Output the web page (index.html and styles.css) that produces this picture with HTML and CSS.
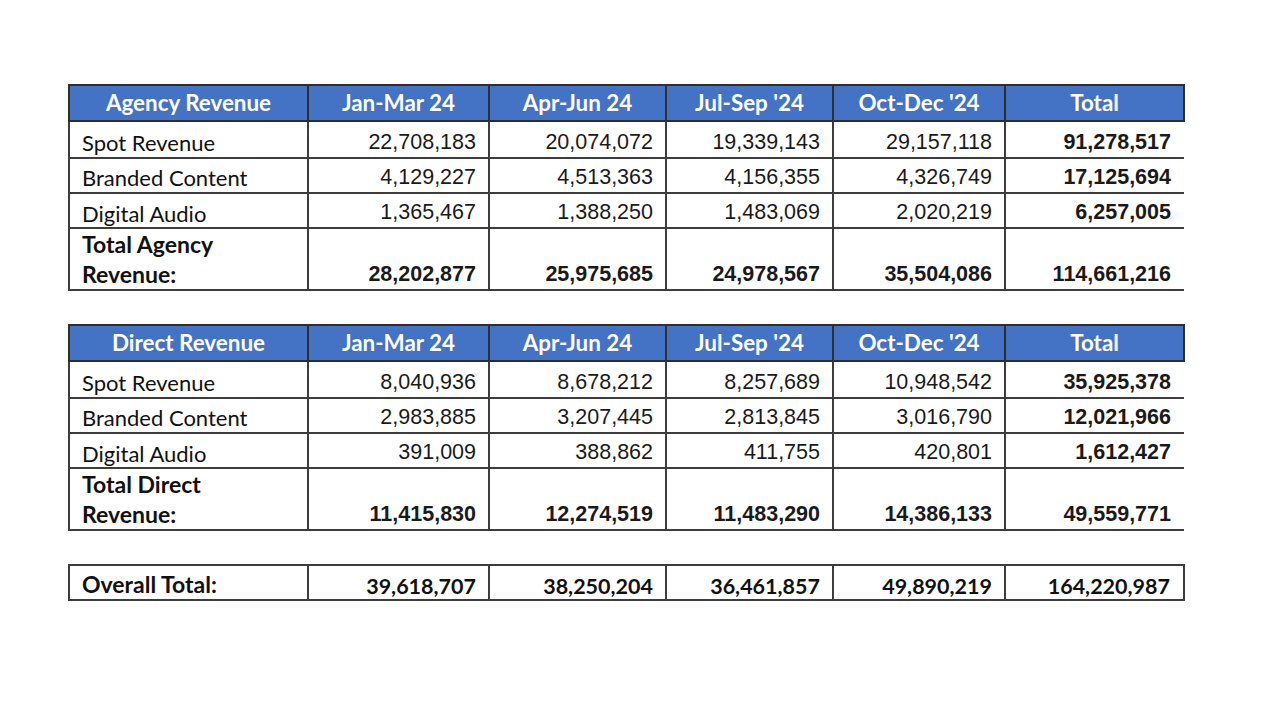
FILE: index.html
```html
<!DOCTYPE html>
<html>
<head>
<meta charset="utf-8">
<link rel="stylesheet" href="styles.css">
</head>
<body>
<div class="page">
  <table class="rev">
    <colgroup><col class="c0"><col class="c1"><col class="c2"><col class="c3"><col class="c4"><col class="c5"></colgroup>
    <tr class="head"><th>Agency Revenue</th><th>Jan-Mar 24</th><th>Apr-Jun 24</th><th>Jul-Sep '24</th><th>Oct-Dec '24</th><th>Total</th></tr>
    <tr class="r1"><td class="lbl">Spot Revenue</td><td>22,708,183</td><td>20,074,072</td><td>19,339,143</td><td>29,157,118</td><td class="tot">91,278,517</td></tr>
    <tr class="r2"><td class="lbl">Branded Content</td><td>4,129,227</td><td>4,513,363</td><td>4,156,355</td><td>4,326,749</td><td class="tot">17,125,694</td></tr>
    <tr class="r3"><td class="lbl">Digital Audio</td><td>1,365,467</td><td>1,388,250</td><td>1,483,069</td><td>2,020,219</td><td class="tot">6,257,005</td></tr>
    <tr class="sum"><td class="lbl">Total Agency<br>Revenue:</td><td>28,202,877</td><td>25,975,685</td><td>24,978,567</td><td>35,504,086</td><td class="tot">114,661,216</td></tr>
  </table>

  <table class="rev">
    <colgroup><col class="c0"><col class="c1"><col class="c2"><col class="c3"><col class="c4"><col class="c5"></colgroup>
    <tr class="head"><th>Direct Revenue</th><th>Jan-Mar 24</th><th>Apr-Jun 24</th><th>Jul-Sep '24</th><th>Oct-Dec '24</th><th>Total</th></tr>
    <tr class="r1"><td class="lbl">Spot Revenue</td><td>8,040,936</td><td>8,678,212</td><td>8,257,689</td><td>10,948,542</td><td class="tot">35,925,378</td></tr>
    <tr class="r2"><td class="lbl">Branded Content</td><td>2,983,885</td><td>3,207,445</td><td>2,813,845</td><td>3,016,790</td><td class="tot">12,021,966</td></tr>
    <tr class="r3"><td class="lbl">Digital Audio</td><td>391,009</td><td>388,862</td><td>411,755</td><td>420,801</td><td class="tot">1,612,427</td></tr>
    <tr class="sum"><td class="lbl">Total Direct<br>Revenue:</td><td>11,415,830</td><td>12,274,519</td><td>11,483,290</td><td>14,386,133</td><td class="tot">49,559,771</td></tr>
  </table>

  <table class="rev overall">
    <colgroup><col class="c0"><col class="c1"><col class="c2"><col class="c3"><col class="c4"><col class="c5"></colgroup>
    <tr class="ov"><td class="lbl">Overall Total:</td><td>39,618,707</td><td>38,250,204</td><td>36,461,857</td><td>49,890,219</td><td class="tot">164,220,987</td></tr>
  </table>
</div>
</body>
</html>
```

FILE: styles.css
```css
html, body {
  margin: 0;
  padding: 0;
  background: #ffffff;
}

.page {
  width: 1280px;
  height: 720px;
  padding: 84px 0 0 68px;
  box-sizing: border-box;
  display: flex;
  flex-direction: column;
  gap: 33px;
}

.rev {
  border-collapse: collapse;
  table-layout: fixed;
  width: 1117px;
}

.c0 { width: 239px; }
.c1 { width: 181px; }
.c2 { width: 177px; }
.c3 { width: 167px; }
.c4 { width: 172px; }
.c5 { width: 179px; }

.rev th,
.rev td {
  border: 2px solid #3d3d3d;
  padding: 0;
  overflow: hidden;
  white-space: nowrap;
}

.rev td:last-child {
  border-right: none;
}

.head th {
  height: 29px;
  background: #4472c4;
  color: #ffffff;
  font-family: "Lato", "Liberation Sans", sans-serif;
  font-weight: 700;
  font-size: 22.4px;
  line-height: 24px;
  text-align: center;
  vertical-align: bottom;
  border-color: #2e2e2e;
  padding-bottom: 5px;
}

.rev td {
  font-family: "Liberation Sans", Arial, sans-serif;
  font-size: 21.5px;
  color: #1a1a1a;
  text-align: right;
  vertical-align: bottom;
  padding-right: 12px;
  padding-bottom: 3px;
  line-height: 24px;
}

.rev td.lbl {
  font-family: "Lato", "Liberation Sans", sans-serif;
  font-size: 22px;
  text-align: left;
  padding-left: 12px;
  padding-right: 0;
  padding-bottom: 1.5px;
  color: #111111;
}

.rev td.tot {
  font-weight: 700;
  padding-right: 13px;
}

.r1 td { height: 31.5px; }
.r2 td { height: 30px; }
.r3 td { height: 30.5px; }

.sum td {
  height: 53px;
  font-weight: 700;
}

.sum td.lbl {
  font-weight: 700;
  font-size: 23px;
  line-height: 30px;
  padding-bottom: 0;
}

.rev.overall td:last-child {
  border-right: 2px solid #3d3d3d;
}

.rev .ov td {
  height: 30px;
  font-family: "Lato", "Liberation Sans", sans-serif;
  font-weight: 700;
  font-size: 21.5px;
  padding-bottom: 1px;
  color: #111111;
}

.rev .ov td.lbl {
  font-size: 23px;
  padding-bottom: 2.5px;
}
```
